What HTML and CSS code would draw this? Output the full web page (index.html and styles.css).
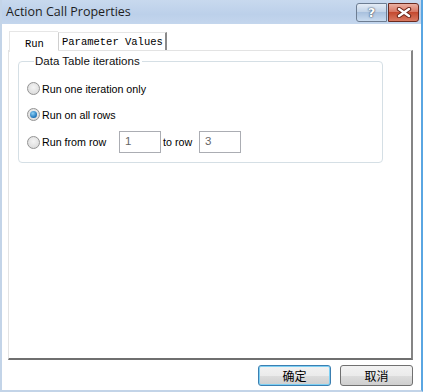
FILE: index.html
```html
<!DOCTYPE html>
<html lang="zh-cn">
  <head>
    <meta charset="UTF-8" />
    <title>Action Call Properties</title>
    <link rel="stylesheet" href="styles.css">
  </head>
  <body>
    <div class="window">
      <div class="titlebar">
        <span class="title">Action Call Properties</span>
        <div class="caption-buttons">
          <button class="cap help">?</button>
          <button class="cap close">
            <svg width="16" height="11" viewBox="0 0 16 11">
              <path d="M3 2 L13 9 M13 2 L3 9" stroke="#6b2417" stroke-width="4.4" stroke-linecap="round"/>
              <path d="M3 2 L13 9 M13 2 L3 9" stroke="#fff" stroke-width="2.4" stroke-linecap="round"/>
            </svg>
          </button>
        </div>
      </div>

      <div class="content">
        <div class="tabs">
          <div class="tab active">Run</div>
          <div class="tab">Parameter Values</div>
        </div>
        <div class="tab-panel">
          <fieldset class="group">
            <legend>Data Table iterations</legend>
            <label class="option">
              <span class="radio"></span>
              Run one iteration only
            </label>
            <label class="option">
              <span class="radio checked"></span>
              Run on all rows
            </label>
            <div class="option">
              <span class="radio"></span>
              <span class="from-label">Run from row</span>
              <span class="field">1</span>
              <span class="to-label">to row</span>
              <span class="field">3</span>
            </div>
          </fieldset>
        </div>

        <div class="actions">
          <button class="btn default">确定</button>
          <button class="btn">取消</button>
        </div>
      </div>
    </div>
  </body>
</html>
```

FILE: styles.css
```css
* {
  margin: 0;
  padding: 0;
  box-sizing: border-box;
}

body {
  width: 423px;
  height: 392px;
  background-color: #fff;
  font-family: "Liberation Sans", Arial, sans-serif;
  font-size: 11px;
  color: #000;
  overflow: hidden;
}

.window {
  width: 423px;
  height: 392px;
  border-left: 2px solid #c3d4e8;
  border-right: 2px solid #5aa6e2;
  border-bottom: 2px solid #c3d4e8;
  display: flex;
  flex-direction: column;
}

.titlebar {
  height: 24px;
  background: linear-gradient(to bottom, #c8d9ee, #bcd0ea 60%, #c4d6ed);
  display: flex;
  align-items: center;
  justify-content: space-between;
  padding-left: 4px;
  padding-right: 2px;
}

.title {
  font-family: "Open Sans", "Liberation Sans", sans-serif;
  font-size: 12.5px;
  color: #1e1e1e;
  margin-top: -1px;
}

.caption-buttons {
  display: flex;
  gap: 1px;
  align-self: flex-start;
  margin-top: 3px;
}

.cap {
  height: 19px;
  border: 1px solid #6d7d92;
  display: flex;
  align-items: center;
  justify-content: center;
}

.help {
  width: 31px;
  background: linear-gradient(to bottom, #e4ecf6, #c3d4e8 45%, #a9c1de 50%, #c9dbef);
  color: #fff;
  font-family: "DejaVu Sans", sans-serif;
  font-weight: bold;
  font-size: 13px;
  text-shadow: 0 0 2px #33475f, 0 0 1px #33475f;
  border-radius: 3px 0 0 3px;
}

.close {
  width: 31px;
  background: linear-gradient(to bottom, #eab0a2, #d87865 45%, #c54a30 50%, #d97a62);
  border-color: #6a2a1f;
  border-radius: 0 3px 3px 0;
}

.content {
  flex: 1;
  display: flex;
  flex-direction: column;
  padding: 7px 8px 0 6px;
}

.tabs {
  display: flex;
  height: 19px;
  padding-left: 1px;
}

.tab {
  font-family: "Liberation Mono", "Courier New", monospace;
  font-size: 10.5px;
  padding: 3px 2px 0 3px;
  border-right: 2px solid #8a8a8a;
  border-left: 1px solid #cfcfcf;
  border-top: 1px solid #e6e6e6;
  margin-top: 1px;
}

.tab.active {
  width: 49px;
  margin-top: 0;
  padding: 6px 0 0 15px;
  border-right: none;
  border-left-color: #e6e6e6;
  height: 21px;
  background-color: #fff;
  position: relative;
  z-index: 1;
}

.tab-panel {
  height: 310px;
  border-top: 1px solid #e3e3e3;
  border-left: 1px solid #e3e3e3;
  border-right: 2px solid #858585;
  border-bottom: 2px solid #6f6f6f;
  padding: 4px 28px 0 9px;
}

.group {
  height: 108px;
  border: 1px solid #d5dfe5;
  border-radius: 4px;
  padding: 12px 0 0 8px;
  display: flex;
  flex-direction: column;
  gap: 7px;
}

.group legend {
  margin-left: 7px;
  padding: 0 2px 0 1px;
  font-size: 11.5px;
  color: #111;
}

.option {
  height: 19px;
  display: flex;
  align-items: center;
  gap: 2px;
  font-size: 10.7px;
}

.radio {
  width: 13px;
  height: 13px;
  border-radius: 50%;
  border: 1px solid #939393;
  background: radial-gradient(circle at 50% 40%, #f4f4f4, #d6d6d6);
  display: flex;
  align-items: center;
  justify-content: center;
}

.radio.checked::after {
  content: "";
  width: 7px;
  height: 7px;
  border-radius: 50%;
  background: radial-gradient(circle at 40% 35%, #8cd0f5, #1b72b8 70%, #0c4c86);
}

.option:last-child {
  height: 22px;
}

.from-label {
  width: 75px;
}

.field {
  width: 42px;
  height: 22px;
  border: 1px solid #abadb3;
  color: #666;
  padding: 3px 0 0 5px;
  font-size: 11.5px;
}

.to-label {
  margin: 0 5px 0 0;
}

.actions {
  display: flex;
  justify-content: flex-end;
  gap: 9px;
  padding: 5px 0 0;
}

.btn {
  width: 73px;
  height: 21px;
  border: 1px solid #707070;
  border-radius: 3px;
  background: linear-gradient(to bottom, #f2f2f2, #ebebeb 50%, #dddddd 51%, #cfcfcf);
  font-family: "Noto Sans CJK SC", sans-serif;
  font-size: 12px;
  line-height: 17px;
  color: #000;
}

.btn.default {
  border-color: #3c7fb1;
  box-shadow: inset 0 0 0 1px #7ed0f4;
}
```
